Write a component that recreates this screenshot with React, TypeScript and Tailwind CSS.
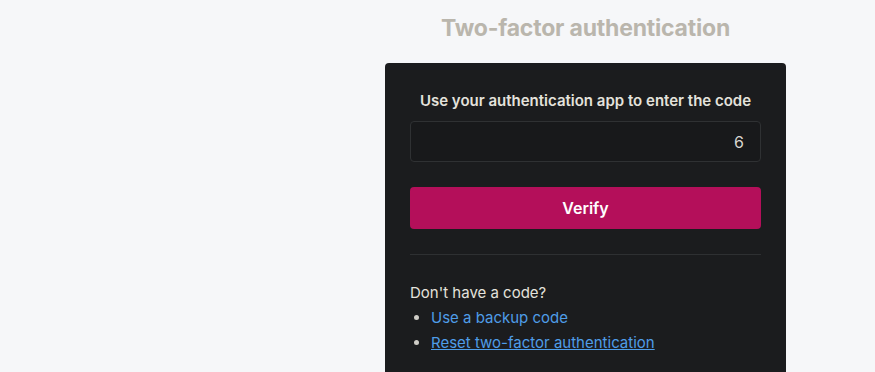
import React from "react";

export default function App() {
  return (
    <div className="w-[875px] h-[372px] overflow-hidden bg-[#f6f7f9] flex" style={{ fontFamily: "Inter, 'Noto Sans', sans-serif" }}>
      <div className="w-[296px] shrink-0" />
      <div className="flex-1 flex flex-col items-center">
        <h1 className="mt-[13px] text-[23px] leading-[30px] font-bold text-[#bab6ad] tracking-[-0.2px]">Two-factor authentication</h1>
        <div className="mt-[20px] w-[401px] bg-[#1b1c1e] rounded-[4px] px-[25px] pt-[28px] pb-[30px]">
          <p className="text-center text-[15px] leading-[20px] font-semibold text-[#e4e2dc]">Use your authentication app to enter the code</p>
          <div className="mt-[10px] h-[41px] rounded-[4px] border border-[#2f3133] bg-[#18191b] flex items-center justify-end pr-[16px] text-[16px] text-[#d8d6d0]">6</div>
          <button className="mt-[25px] w-full h-[42px] rounded-[4px] bg-[#b40f5a] text-white text-[16px] font-semibold">Verify</button>
          <div className="mt-[25px] h-px bg-[#2e3032]" />
          <p className="mt-[25px] text-[15px] leading-[25px] text-[#e4e2dc]">Don't have a code?</p>
          <ul className="list-disc pl-[21px] text-[15px] leading-[25px] marker:text-[#cfcdc7]">
            <li><a className="text-[#4f9de8]">Use a backup code</a></li>
            <li><a className="text-[#4f9de8] underline">Reset two-factor authentication</a></li>
          </ul>
        </div>
      </div>
    </div>
  );
}
